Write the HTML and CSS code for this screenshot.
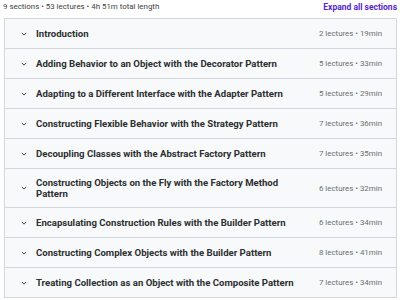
FILE: index.html
```html
<!DOCTYPE html>
<html lang="en">
<head>
<meta charset="utf-8">
<link rel="stylesheet" href="styles.css">
</head>
<body>
<div class="page">
  <div class="top">
    <span class="summary">9 sections • 53 lectures • 4h 51m total length</span>
    <span class="expand">Expand all sections</span>
  </div>
  <div class="sections">
    <div class="row"><svg class="chev" viewBox="0 0 8 5"><path d="M1 1l3 3 3-3"/></svg><span class="title">Introduction</span><span class="meta">2 lectures • 19min</span></div>
    <div class="row"><svg class="chev" viewBox="0 0 8 5"><path d="M1 1l3 3 3-3"/></svg><span class="title">Adding Behavior to an Object with the Decorator Pattern</span><span class="meta">5 lectures • 33min</span></div>
    <div class="row"><svg class="chev" viewBox="0 0 8 5"><path d="M1 1l3 3 3-3"/></svg><span class="title">Adapting to a Different Interface with the Adapter Pattern</span><span class="meta">5 lectures • 29min</span></div>
    <div class="row"><svg class="chev" viewBox="0 0 8 5"><path d="M1 1l3 3 3-3"/></svg><span class="title">Constructing Flexible Behavior with the Strategy Pattern</span><span class="meta">7 lectures • 36min</span></div>
    <div class="row"><svg class="chev" viewBox="0 0 8 5"><path d="M1 1l3 3 3-3"/></svg><span class="title">Decoupling Classes with the Abstract Factory Pattern</span><span class="meta">7 lectures • 35min</span></div>
    <div class="row"><svg class="chev" viewBox="0 0 8 5"><path d="M1 1l3 3 3-3"/></svg><span class="title">Constructing Objects on the Fly with the Factory Method Pattern</span><span class="meta">6 lectures • 32min</span></div>
    <div class="row"><svg class="chev" viewBox="0 0 8 5"><path d="M1 1l3 3 3-3"/></svg><span class="title">Encapsulating Construction Rules with the Builder Pattern</span><span class="meta">6 lectures • 34min</span></div>
    <div class="row"><svg class="chev" viewBox="0 0 8 5"><path d="M1 1l3 3 3-3"/></svg><span class="title">Constructing Complex Objects with the Builder Pattern</span><span class="meta">8 lectures • 41min</span></div>
    <div class="row"><svg class="chev" viewBox="0 0 8 5"><path d="M1 1l3 3 3-3"/></svg><span class="title">Treating Collection as an Object with the Composite Pattern</span><span class="meta">7 lectures • 34min</span></div>
  </div>
</div>
</body>
</html>
```
FILE: styles.css
```css
html, body {
  margin: 0;
  padding: 0;
  background: #ffffff;
}
body {
  font-family: Roboto, "Liberation Sans", sans-serif;
  color: #2d2f31;
}
.page {
  padding: 0 3px 0 4px;
}
.top {
  display: flex;
  justify-content: space-between;
  align-items: center;
  height: 15px;
  margin-top: -1px;
  margin-bottom: 4px;
  margin-left: -1px;
}
.summary {
  font-size: 7.9px;
  color: #3e4143;
}
.expand {
  font-size: 8.5px;
  font-weight: 700;
  color: #5624d0;
}
.sections {
  border: 1px solid #d1d7dc;
  border-bottom: none;
}
.row {
  display: flex;
  align-items: center;
  min-height: 30px;
  background: #f7f9fa;
  border-bottom: 1px solid #d1d7dc;
  padding: 0 14px 0 16px;
  box-sizing: border-box;
}
.row:nth-child(6) {
  min-height: 39px;
}
.chev {
  width: 6px;
  height: 4px;
  flex: none;
  margin-right: 9px;
  fill: none;
  stroke: #2d2f31;
  stroke-width: 1.2;
}
.title {
  flex: 1;
  font-size: 9.6px;
  font-weight: 700;
  line-height: 11px;
  padding-right: 14px;
}
.meta {
  flex: none;
  font-size: 7.9px;
  color: #6a6f73;
}
```
